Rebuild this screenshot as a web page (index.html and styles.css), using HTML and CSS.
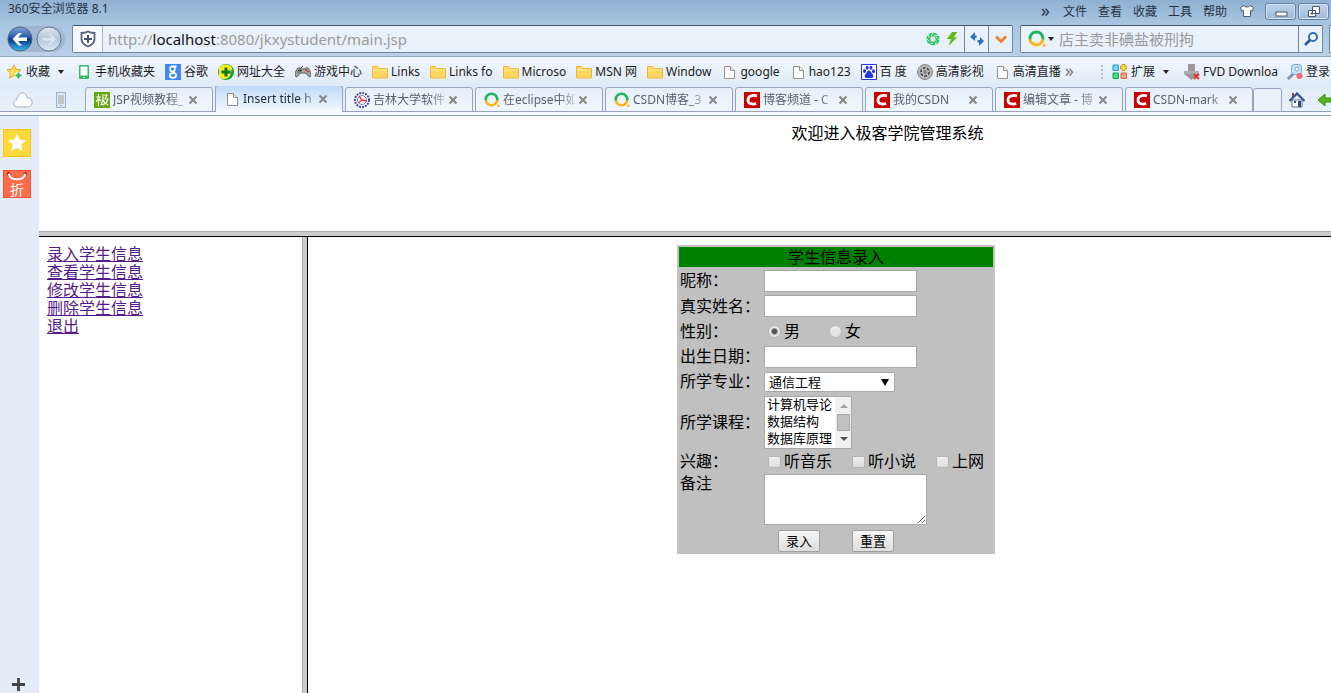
FILE: index.html
```html
<!DOCTYPE html>
<html lang="zh-CN">
<head>
<meta charset="utf-8">
<title>Insert title here</title>
<link rel="stylesheet" href="styles.css">
</head>
<body>
<svg class="defs" aria-hidden="true">
  <defs>
    <linearGradient id="blue" x1="0" y1="0" x2="0" y2="1"><stop offset="0" stop-color="#7fa6dc"/><stop offset=".45" stop-color="#2456a8"/><stop offset=".5" stop-color="#06327f"/><stop offset="1" stop-color="#35c0f5"/></linearGradient>
    <linearGradient id="pale" x1="0" y1="0" x2="0" y2="1"><stop offset="0" stop-color="#dfe9f3"/><stop offset=".5" stop-color="#b3c6da"/><stop offset="1" stop-color="#dce9f5"/></linearGradient>
    <linearGradient id="ring" x1="0" y1="0" x2="0" y2="1"><stop offset=".5" stop-color="#1fb45c"/><stop offset=".62" stop-color="#f9b417"/></linearGradient>
  </defs>
  <symbol id="folder" viewBox="0 0 16 16"><path d="M.5 2.500h5l1.500 2h8.500v9.500H.5z" fill="#ffd75e" stroke="#efb73a"/><path d="M1 6h14" stroke="#fff0a8"/></symbol>
  <symbol id="page" viewBox="0 0 16 16"><path d="M3.500 2.500h6l4 4v8h-10z" fill="#fff" stroke="#929292"/><path d="M9.500 2.500v4h4" fill="#eee" stroke="#929292"/></symbol>
  <symbol id="csdn" viewBox="0 0 16 16"><path d="M0 0h16v16H0z" fill="#c80000"/><path d="M13 3.800C8 2.600 4.300 4.300 4 7.800c-.2 3.500 3 5 8.200 3.900" fill="none" stroke="#fff" stroke-width="2.800"/></symbol>
  <symbol id="search360" viewBox="0 0 16 16"><circle cx="7.500" cy="7.500" r="5.800" fill="none" stroke="url(#ring)" stroke-width="2.600"/><circle cx="14.500" cy="13.800" r="1.200" fill="#f9b417"/></symbol>
  <symbol id="close" viewBox="0 0 10 10"><path d="M1.500 1.500l7 7m0-7l-7 7" stroke="#858585" stroke-width="2"/></symbol>
</svg>

<header class="chrome">
  <div class="titlebar">
    <span class="app-name">360安全浏览器 8.1</span>
    <nav class="menu">
      <button class="chevrons">»</button><button>文件</button><button>查看</button><button>收藏</button><button>工具</button><button>帮助</button>
      <button aria-label="皮肤"><svg class="shirt" viewBox="0 0 14 14"><path d="M4 1.500L.5 3.500l1 3.500 2-.5v6h7v-6l2 .5 1-3.500L10 1.500c-1 2-5 2-6 0z" fill="#fff" stroke="#4a5e78"/></svg></button>
    </nav>
    <div class="window-buttons">
      <button aria-label="最小化"><svg viewBox="0 0 14 12"><rect x="2" y="6" width="11" height="4" fill="#fff" stroke="#4c5a6b"/></svg></button>
      <button aria-label="还原"><svg viewBox="0 0 14 12"><path d="M5.500.5h7v7h-7zM1.500 4.500h7v6h-7z" fill="#fff" stroke="#4c5a6b"/><path d="M4 7h2v1H4z" fill="#8ba8c6" stroke="#4c5a6b"/></svg></button>
    </div>
  </div>
  <div class="toolbar">
    <div class="history">
      <button aria-label="后退"><svg viewBox="0 0 26 26"><circle cx="13" cy="13" r="12" fill="url(#blue)" stroke="#50647f"/><path d="M5.500 13l6-6h3.500l-4 4.500h9v3.500h-9l4 4.500h-3.500z" fill="#fff"/></svg></button>
      <button aria-label="前进"><svg viewBox="0 0 26 26"><circle cx="13" cy="13" r="12" fill="url(#pale)" stroke="#64788f"/><path d="M20.500 13l-6-6H11l4 4.500H6v3.500h9l-4 4.500h3.500z" fill="#dae5ed" stroke="#b4c5d4" stroke-width=".5"/></svg></button>
    </div>
    <div class="field address">
      <button class="shield" aria-label="安全"><svg viewBox="0 0 18 18"><path d="M9 1.500c2 1.500 4.500 1.500 6.500 1.500v6c0 4-3 6-6.500 7.500C5.500 15 2.500 13 2.500 9V3c2 0 4.500 0 6.500-1.500z" fill="#fff" stroke="#55657b" stroke-width="1.800"/><path d="M9 5v8M5 9h8" stroke="#44546b" stroke-width="2"/></svg></button>
      <div class="url" role="textbox" aria-label="地址">http://<b>localhost</b>:8080/jkxystudent/main.jsp</div>
      <button class="mini" aria-label="兼容模式"><svg viewBox="0 0 16 16"><circle cx="8" cy="8" r="5.200" fill="none" stroke="#32c765" stroke-width="4.500"/><path d="M8 0l-2 5M14.500 3.500L9 4.500M16 10l-4-4M10 16l2-5M3 14l5-1M0 7l4 4M2 2l2 5" stroke="#eaf4fb"/></svg></button>
      <button class="mini" aria-label="极速模式"><svg viewBox="0 0 16 16"><path d="M8 0h6l-4 6h4L4 16l3-8H2z" fill="#62bb18"/></svg></button>
      <button class="cell" aria-label="刷新"><svg viewBox="0 0 16 16"><path d="M6 1L1 6l5 4V7h1.500V4.500H6zM10 15l5-5-4-4v3H8.500v2.500H10z" fill="#2c72bd"/></svg></button>
      <button class="cell" aria-label="地址列表"><svg viewBox="0 0 16 16"><path d="M3 5.500l5 5 5-5" fill="none" stroke="#ec8435" stroke-width="3"/></svg></button>
    </div>
    <div class="field search">
      <svg class="engine" viewBox="0 0 16 16"><use href="#search360"/></svg><i class="caret"></i>
      <input type="text" aria-label="搜索" placeholder="店主卖非碘盐被刑拘">
      <button class="cell" aria-label="搜索按钮"><svg viewBox="0 0 16 16"><circle cx="10" cy="6" r="4" fill="#fff" stroke="#2c6fb8" stroke-width="2"/><path d="M7 9l-5 5" stroke="#24579d" stroke-width="2.600"/></svg></button>
    </div>
    <div class="field edge"></div>
  </div>
  <nav class="bookmarks">
    <a href="#"><svg viewBox="0 0 16 16"><path d="M7 .8l2 4.500 5 .5-3.700 3.400 1 4.800L7 11.500 2.500 14l1-4.800L0 5.800l5-.5z" fill="#ffdc57" stroke="#e5a82e"/><path d="M11.500 8v7M8 11.500h7" stroke="#fff" stroke-width="4"/><path d="M11.500 8.500v6M8.500 11.500h6" stroke="#32b15c" stroke-width="2"/></svg>收藏<i class="caret spaced"></i></a>
    <a class="phone" href="#"><svg viewBox="0 0 16 16"><rect x="3" y="1" width="10" height="14" rx="1" fill="#32bd65"/><path d="M4.500 2.500h7v9h-7z" fill="#fff"/><path d="M7 13h2v1H7z" fill="#fff"/></svg>手机收藏夹</a>
    <a href="#"><svg viewBox="0 0 16 16"><path d="M0 0h16v16H0z" fill="#4486f4"/><g fill="none" stroke="#fff" stroke-width="1.700"><ellipse cx="7.500" cy="5" rx="2.400" ry="2.600"/><ellipse cx="8" cy="11.500" rx="3.200" ry="2.300"/><path d="M8 7.500l2 2M8 2.300h3.500"/></g></svg>谷歌</a>
    <a href="#"><svg viewBox="0 0 16 16"><circle cx="8" cy="8" r="8" fill="#13a436"/><path d="M1 4c4-5 11-4 13 0l-2 8c-3 4-9 4-11 0z" fill="#ffea21"/><path d="M8 3.500v9M3.500 8h9" stroke="#087529" stroke-width="3"/></svg>网址大全</a>
    <a href="#"><svg viewBox="0 0 16 16"><path d="M3 4c2-1 3 1 5 1s3-2 5-1c2 1 4 8 2 9-2 0-3-4-5-4H6c-2 0-3 4-5 4-2-1 0-8 2-9z" fill="#a7a7a7" stroke="#606060"/><path d="M5 4.500v4M3 6.500h4M6 4l2-2" stroke="#3c3c3c"/><circle cx="11" cy="6" r="1" fill="#d32424"/><circle cx="13" cy="7.500" r="1" fill="#d32424"/><circle cx="3" cy="8" r="1" fill="#16a34a"/></svg>游戏中心</a>
    <a href="#"><svg><use href="#folder"/></svg>Links</a>
    <a href="#"><svg><use href="#folder"/></svg>Links fo</a>
    <a href="#"><svg><use href="#folder"/></svg>Microso</a>
    <a href="#"><svg><use href="#folder"/></svg>MSN 网</a>
    <a href="#"><svg><use href="#folder"/></svg>Window</a>
    <a href="#"><svg><use href="#page"/></svg>google</a>
    <a href="#"><svg><use href="#page"/></svg>hao123</a>
    <a href="#"><svg viewBox="0 0 16 16"><path d="M.5.5h15v15H.5z" fill="#fff" stroke="#2935dd"/><g fill="#2935dd"><ellipse cx="3.500" cy="7" rx="1.500" ry="2"/><ellipse cx="6.200" cy="3.800" rx="1.500" ry="2"/><ellipse cx="10" cy="3.800" rx="1.500" ry="2"/><ellipse cx="12.500" cy="7.200" rx="1.500" ry="2"/><path d="M8 6.500c2 0 2 2.500 4 4 1 2 0 4-2 3.500H6c-2 .5-3-1.500-2-3.500 2-1.500 2-4 4-4z"/></g></svg>百 度</a>
    <a href="#"><svg viewBox="0 0 16 16"><circle cx="8" cy="8" r="7.500" fill="#b9b9b9" stroke="#858585"/><circle cx="8" cy="8" r="4" fill="#eee" stroke="#555" stroke-width="2" stroke-dasharray="3 1"/><path d="M8 5l3 3-3 3-3-3z" fill="#888"/></svg>高清影视</a>
    <a href="#"><svg><use href="#page"/></svg>高清直播</a>
    <span class="more">»</span>
    <span class="extras">
      <i class="grip"></i>
      <a href="#"><svg viewBox="0 0 16 16"><path d="M1 1h5.500v5.500H1z" fill="#7fd2fa" stroke="#279bd0"/><path d="M1 9h5.500v5.500H1z" fill="#43db8b" stroke="#12a45b"/><path d="M9 9h5.500v5.500H9z" fill="#ffa080" stroke="#ec603a"/><path d="M11.500 0v7M8 3.500h7" stroke="#dc9c15" stroke-width="3.500"/><path d="M11.500 1v5M9 3.500h5" stroke="#fff05d" stroke-width="1.500"/></svg>扩展<i class="caret spaced"></i></a>
      <a href="#"><svg viewBox="0 0 16 16"><path d="M4 0h7v7h4v3l-7.500 6L0 10V7h4z" fill="#999"/><path d="M0 7h15v3H0z" fill="#adadad"/><path d="M10 10l5 5m0-5l-5 5" stroke="#ed3030" stroke-width="2"/></svg>FVD Downloa</a>
      <a href="#"><svg viewBox="0 0 16 16"><path d="M1 15l6-6" stroke="#8193a5" stroke-width="3"/><rect x="4.500" y=".5" width="10" height="10" rx="3" fill="#c2e1f6" stroke="#7fa9cb"/><circle cx="10" cy="5" r="2" fill="#fff" stroke="#7fa9cb"/><circle cx="12.500" cy="12" r="3" fill="#f36868"/></svg>登录</a>
    </span>
  </nav>
  <div class="tabs">
    <svg class="cloud" viewBox="0 0 20 16"><path d="M5 15c-5.500 0-6-6.500-1-7.500C4 3 8-.5 11.500 1.500c1.500 1 2 2.500 2.500 4.500 6-1 7 7.500 1.500 9z" fill="#fff" stroke="#a3b1c2"/></svg>
    <svg class="device" viewBox="0 0 10 16"><path d="M.5.5h9v15h-9z" fill="#dbe7f5" stroke="#9bb2d0"/><path d="M2 3h6v9H2z" fill="#c0c5cb"/><path d="M4 13.500h2" stroke="#8da2bf"/></svg>
    <div class="tab"><svg viewBox="0 0 16 16"><path d="M0 0h16v16H0z" fill="#64a90e"/><path d="M2 5h5M4.500 2v12M4 7l-2 3M5 7l2 2M8 3h5l-2 4h3c-1 3-3 5-6 6M9 4c0 4 0 6-2 9M9 8c1 3 3 4 5 5" fill="none" stroke="#fff" stroke-width="1.200"/></svg><span>JSP视频教程_</span><button aria-label="关闭"><svg><use href="#close"/></svg></button></div>
    <div class="tab active"><svg><use href="#page"/></svg><span>Insert title h</span><button aria-label="关闭"><svg><use href="#close"/></svg></button></div>
    <div class="tab"><svg viewBox="0 0 16 16"><circle cx="8" cy="8" r="7" fill="#fff" stroke="#424d9c" stroke-width="2" stroke-dasharray="2 1"/><circle cx="8" cy="8" r="4.500" fill="none" stroke="#7a80b8"/><path d="M5 4l3 4 5 1M8 8l-4 3" fill="none" stroke="#d44" stroke-width="1.500"/></svg><span>吉林大学软件</span><button aria-label="关闭"><svg><use href="#close"/></svg></button></div>
    <div class="tab"><svg><use href="#search360"/></svg><span>在eclipse中如</span><button aria-label="关闭"><svg><use href="#close"/></svg></button></div>
    <div class="tab"><svg><use href="#search360"/></svg><span>CSDN博客_3</span><button aria-label="关闭"><svg><use href="#close"/></svg></button></div>
    <div class="tab"><svg><use href="#csdn"/></svg><span>博客频道 - C</span><button aria-label="关闭"><svg><use href="#close"/></svg></button></div>
    <div class="tab"><svg><use href="#csdn"/></svg><span>我的CSDN</span><button aria-label="关闭"><svg><use href="#close"/></svg></button></div>
    <div class="tab"><svg><use href="#csdn"/></svg><span>编辑文章 - 博</span><button aria-label="关闭"><svg><use href="#close"/></svg></button></div>
    <div class="tab"><svg><use href="#csdn"/></svg><span>CSDN-mark</span><button aria-label="关闭"><svg><use href="#close"/></svg></button></div>
    <button class="new-tab" aria-label="新标签页"></button>
    <svg class="nav-icon" viewBox="0 0 16 16"><path d="M3 8h10v7H3z" fill="#fff" stroke="#666e82"/><path d="M3 1h2v4H3z" fill="#b33"/><path d="M.5 9L8 1.500 15.500 9" fill="none" stroke="#33519c" stroke-width="2.200"/><path d="M5 9h2v2H5zM9 9h3v6H9z" fill="#344b91"/></svg>
    <svg class="nav-icon" viewBox="0 0 16 16"><path d="M0 8l7-6v4h9v4H7v4z" fill="#58b41b" stroke="#388b10"/></svg>
  </div>
</header>

<div class="workspace">
  <aside class="sidebar">
    <button aria-label="收藏夹"><svg viewBox="0 0 28 28"><path d="M.5.5h27v27H.5z" fill="#ffd93b" stroke="#fbc019"/><path d="M14 4.500l2.700 6 6.300.7-4.700 4.400 1.300 6.400-5.600-3.200L8.400 22l1.300-6.400L5 11.200l6.300-.7z" fill="#fff"/></svg></button>
    <button class="sale">折<svg viewBox="0 0 28 14"><circle cx="5" cy="3" r="2" fill="#873528"/><circle cx="23" cy="3" r="2" fill="#873528"/><path d="M5 3c2 8 16 8 18 0" fill="none" stroke="#fff" stroke-width="2"/></svg></button>
    <button class="add" aria-label="添加"><svg viewBox="0 0 14 14"><path d="M7 0v14M0 7h14" stroke="#444" stroke-width="3"/></svg></button>
  </aside>
  <div class="frames">
    <section class="banner">欢迎进入极客学院管理系统</section>
    <div class="lower">
      <nav class="links">
        <a href="#">录入学生信息</a><a href="#">查看学生信息</a><a href="#">修改学生信息</a><a href="#">删除学生信息</a><a href="#">退出</a>
      </nav>
      <main class="content">
        <form>
          <table class="student">
            <tr class="heading"><th colspan="2">学生信息录入</th></tr>
            <tr><td><label for="nick">昵称：</label></td><td><input class="text" id="nick" type="text"></td></tr>
            <tr class="roomy"><td><label for="name">真实姓名：</label></td><td><input class="text" id="name" type="text"></td></tr>
            <tr><td>性别：</td><td><div class="choices"><label><input type="radio" name="sex" checked>男</label><label><input type="radio" name="sex">女</label></div></td></tr>
            <tr><td><label for="birth">出生日期：</label></td><td><input class="text" id="birth" type="text"></td></tr>
            <tr><td><label for="major">所学专业：</label></td><td><div class="major"><select id="major"><option>通信工程</option></select></div></td></tr>
            <tr class="tall"><td><label for="course">所学课程：</label></td><td><div class="courses"><select id="course" multiple size="3"><option>计算机导论</option><option>数据结构</option><option>数据库原理</option></select><div class="scroll" aria-hidden="true"><i class="up"></i><i class="thumb"></i><i class="down"></i></div></div></td></tr>
            <tr class="short"><td>兴趣：</td><td><div class="choices wide"><label><input type="checkbox">听音乐</label><label><input type="checkbox">听小说</label><label><input type="checkbox">上网</label></div></td></tr>
            <tr class="notes"><td><label for="note">备注</label></td><td><textarea id="note"></textarea></td></tr>
            <tr><td></td><td><div class="actions"><button type="button">录入</button><button type="reset">重置</button></div></td></tr>
          </table>
        </form>
      </main>
    </div>
  </div>
</div>
</body>
</html>
```
FILE: styles.css
```css
* { box-sizing: border-box; }
body {
  margin: 0;
  height: 100vh;
  display: flex;
  flex-direction: column;
  overflow: hidden;
  background: #fff;
  color: #000;
  font: 12px/16px "Noto Sans", "Noto Sans CJK SC", sans-serif;
}
.defs { position: absolute; width: 0; height: 0; }
button { border: 0; padding: 0; background: none; color: inherit; font: inherit; }
svg { display: block; flex: none; }

.chrome { flex: none; background: linear-gradient(#8fb0d2, #a9c5e2 24px, #b9d0e8 56px); }
.titlebar { height: 22px; display: flex; align-items: flex-start; padding-left: 8px; color: #26323f; }
.app-name { line-height: 18px; }
.menu { margin-left: auto; display: flex; gap: 11px; line-height: 24px; }
.menu .chevrons { margin-right: 2px; font-size: 18px; line-height: 16px; padding-bottom: 4px; }
.shirt { width: 14px; height: 14px; margin: 0 0 2px 2px; }
.window-buttons { display: flex; gap: 2px; padding: 3px 2px 0 11px; }
.window-buttons button {
  width: 31px; height: 17px; display: grid; place-items: center;
  border: 1px solid #66809f; border-radius: 3px;
  background: linear-gradient(#bed3e9, #9ebbd9); box-shadow: inset 0 0 0 1px #d5e3f2;
}
.window-buttons svg { width: 14px; height: 12px; }

.toolbar { height: 35px; display: flex; align-items: center; padding-left: 7px; border-bottom: 1px solid #8aa3bf; }
.history { display: flex; gap: 3px; width: 58px; border-radius: 14px; background: #a0b7cf; }
.history svg { width: 26px; height: 26px; }
.field { height: 28px; display: flex; align-items: center; border: 1px solid #71859c; border-top-color: #42566c; border-radius: 2px; background: #e9f1fa; }
.address { flex: 1; margin-left: 7px; }
.shield { width: 30px; height: 26px; display: grid; place-items: center; border-right: 1px solid #a9b9cc; background: #f4f8fc; }
.shield svg { width: 18px; height: 18px; }
.url { flex: 1; padding-left: 5px; font-size: 15px; line-height: 24px; color: #9b9b9b; }
.url b { font-weight: 400; color: #111; }
.mini { width: 19px; }
.mini svg { width: 14px; height: 14px; }
.cell { width: 24px; height: 26px; flex: none; display: grid; place-items: center; border-left: 1px solid #71859c; }
.cell svg { width: 16px; height: 16px; }
.search { width: 303px; margin-left: 7px; padding-left: 7px; }
.engine { width: 18px; height: 18px; }
.search input { flex: 1; min-width: 0; height: 24px; margin-left: 5px; padding: 0; border: 0; outline: 0; background: none; font: 15px/24px "Noto Sans CJK SC", sans-serif; }
.search input::placeholder { color: #999; }
.edge { width: 2px; margin-left: 6px; border-right: 0; }
.caret { width: 0; height: 0; margin-left: 2px; border: 3px solid transparent; border-top: 4px solid #222; border-bottom: 0; }
.spaced { margin: 0 6px 0 5px; }

.bookmarks { height: 29px; display: flex; align-items: center; gap: 10px; padding-left: 7px; background: linear-gradient(#f2f7fd, #dfebf8); white-space: nowrap; }
.bookmarks a { display: flex; align-items: center; gap: 3px; color: #1c1c1c; text-decoration: none; }
.bookmarks svg { width: 16px; height: 16px; }
.bookmarks .phone { margin-left: -4px; }
.more { margin-left: -6px; color: #777; font-size: 18px; line-height: 14px; padding-bottom: 3px; }
.extras { margin-left: auto; width: 230px; flex: none; display: flex; align-items: center; gap: 9px; }
.grip { width: 2px; height: 14px; flex: none; border-left: 2px dotted #b3bdc9; }
.extras a { flex: none; }

.tabs { height: 30px; display: flex; align-items: flex-end; gap: 2px; padding: 0 0 3px 13px; overflow: hidden; border-bottom: 1px solid #8c9db4; background: linear-gradient(#dfebf8, #e9f2fb 25px, #8c9db4 25px, #8c9db4 26px, #f7fbff 26px); }
.cloud { width: 20px; height: 16px; margin-bottom: 4px; }
.device { width: 10px; height: 16px; margin: 0 17px 4px 21px; }
.tab { flex: none; width: 128px; height: 25px; display: flex; align-items: center; gap: 3px; padding-left: 8px; border: 1px solid #98a4be; border-radius: 3px 3px 0 0; background: linear-gradient(#e6eff9, #f0f6fd); color: #586271; }
.tab > svg { width: 16px; height: 16px; }
.tab span { width: 72px; white-space: nowrap; -webkit-mask-image: linear-gradient(90deg, #000 56px, transparent 78px); mask-image: linear-gradient(90deg, #000 56px, transparent 78px); }
.tab button svg { width: 10px; height: 10px; }
.tab.active { height: 27px; border-bottom: 0; background: linear-gradient(#bfdaf7, #f5faff); color: #26303c; }
.new-tab { flex: none; width: 29px; height: 24px; margin-left: -2px; border: 1px solid #98a4be; border-radius: 3px 3px 0 0; background: #e9f2fb; }
.nav-icon { width: 16px; height: 16px; margin: 0 6px 4px 5px; }

.workspace { flex: 1; min-height: 0; display: flex; font: 16px/18px "Liberation Serif", "Noto Sans CJK SC", serif; }
.sidebar { width: 39px; flex: none; display: flex; flex-direction: column; gap: 13px; padding: 13px 0 0 3px; background: #e4ecf7; }
.sidebar button { width: 28px; height: 28px; }
.sidebar .sale { position: relative; padding-top: 11px; border: 1px solid #ee5234; background: #fd6c4b; color: #fff; font: 14px/15px "Noto Sans CJK SC", sans-serif; }
.sale svg { position: absolute; top: 0; left: 0; width: 26px; height: 13px; }
.sidebar .add { width: 36px; height: 31px; margin: auto 0 0 -3px; display: grid; place-items: center; }
.add svg { width: 13px; height: 13px; margin-top: 14px; }

.frames { flex: 1; min-width: 0; display: flex; flex-direction: column; }
.banner { height: 121px; padding: 9px 0 0 405px; text-align: center; border-bottom: 1px solid #000; box-shadow: inset 0 -4px #ccc, inset 0 -5px #aaa; }
.lower { flex: 1; min-height: 0; display: flex; }
.links { width: 269px; flex: none; display: flex; flex-direction: column; align-items: flex-start; padding: 9px 8px; border-right: 1px solid #000; box-shadow: inset -4px 0 #ccc, inset -5px 0 #aaa; }
.links a { color: #551a8b; }
.content { flex: 1; padding: 8px 0 0 33px; }
.student { width: 318px; margin: 0 auto; border-spacing: 2px; background: silver; }
.student td, .student th { height: 23px; padding: 0 1px; font-weight: 400; text-align: left; }
.student td:first-child { width: 82px; padding-top: 1px; white-space: nowrap; }
.student .heading th { height: 20px; padding: 2px 0 0; background: green; text-align: center; }
.student .roomy td { height: 24px; }
.student .short td { height: 21px; }
.student .notes td { height: 53px; vertical-align: top; }
.student .tall td { height: 54px; }
.text, .student textarea, .major, .courses { display: block; border: 1px solid #a9a9a9; background: #fff; }
.text { width: 153px; height: 22px; padding: 1px; }
.student textarea { width: 163px; height: 51px; }
.student select { border: 0; padding: 0; outline: 0; background: #fff; color: #000; appearance: none; font: 13px/17px "Noto Sans CJK SC", sans-serif; }
.major { position: relative; width: 131px; height: 20px; border-radius: 2px; }
.major select { width: 100%; height: 18px; padding-left: 4px; }
.major::after { content: ""; position: absolute; top: 6px; right: 5px; border: 4px solid transparent; border-top: 7px solid #000; border-bottom: 0; pointer-events: none; }
.courses { width: 88px; height: 53px; display: flex; align-items: center; overflow: hidden; }
.courses select { flex: none; width: 70px; height: 57px; overflow: hidden; }
.courses option { height: 17px; min-height: 17px; padding: 0 0 0 2px; line-height: 14px; }
.scroll { flex: 1; align-self: stretch; display: flex; flex-direction: column; align-items: center; justify-content: space-between; padding: 7px 1px 7px 2px; background: #f1f1f1; }
.up, .down { border: 4px solid transparent; }
.up { border-bottom-color: #a3a3a3; border-top: 0; }
.down { border-top-color: #505050; border-bottom: 0; }
.thumb { width: 13px; height: 17px; border: 1px solid #a8a8a8; background: #c1c1c1; }
.choices { display: flex; gap: 29px; padding-left: 4px; }
.wide { gap: 20px; }
.choices label { display: flex; align-items: center; gap: 3px; white-space: nowrap; }
.choices input { appearance: none; width: 13px; height: 12px; margin: 0; border: 1px solid #b5b5b5; border-radius: 2px; background: linear-gradient(#eee, #ddd); }
.choices input[type="radio"] { height: 13px; border-radius: 50%; }
.choices input[type="radio"]:checked { background: radial-gradient(circle, #555 2px, #e8e8e8 4px); }
.actions { display: flex; gap: 32px; padding-left: 14px; }
.actions button { width: 42px; height: 22px; border: 1px solid #a0a0a0; border-radius: 2px; background: linear-gradient(#f6f6f6, #ddd); font: 13px/18px "Noto Sans CJK SC", sans-serif; }
```
